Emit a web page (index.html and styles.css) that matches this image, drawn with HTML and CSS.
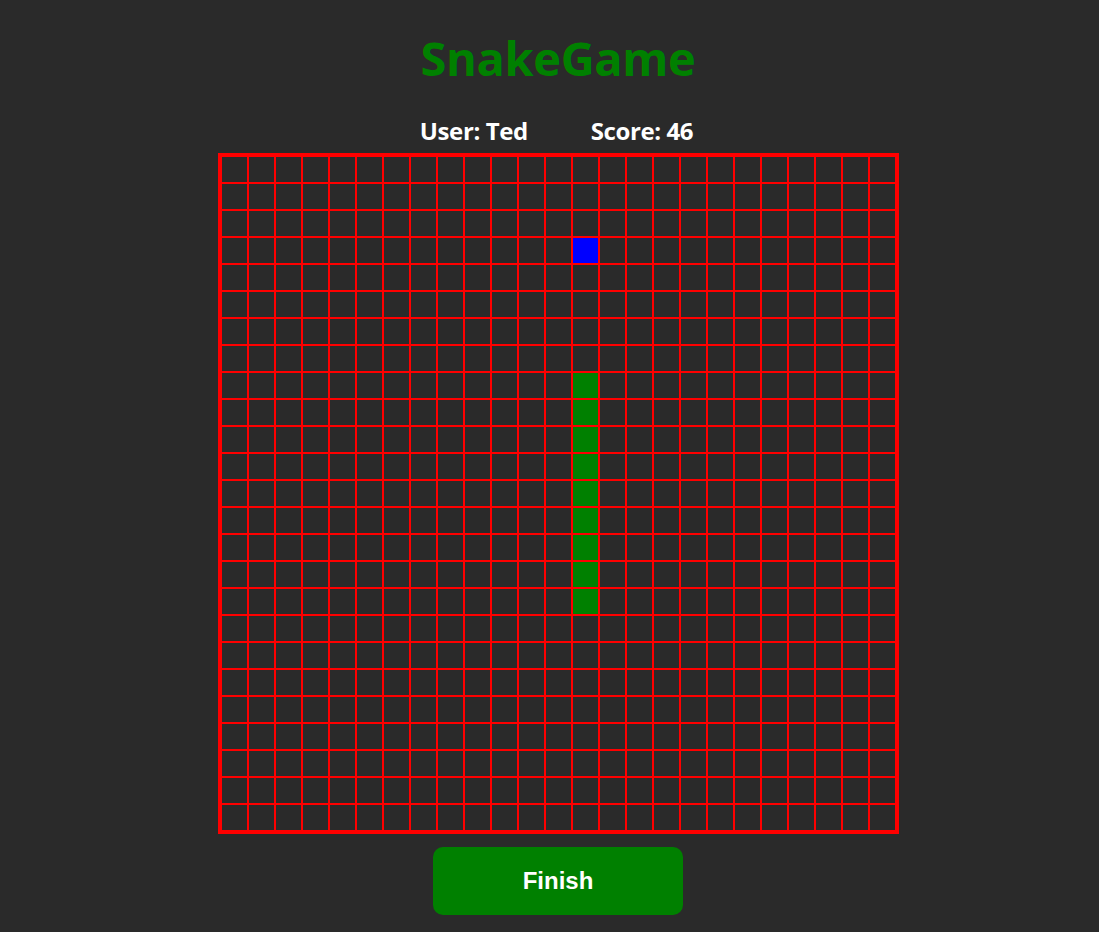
FILE: index.html
```html
<!DOCTYPE html>
<html lang="en">
<head>
<meta charset="utf-8">
<title>SnakeGame</title>
<link rel="stylesheet" href="styles.css">
</head>
<body>
<main class="game">
  <h1 class="title">SnakeGame</h1>
  <div class="info">
    <span class="info-item">User: Ted</span>
    <span class="info-item">Score: 46</span>
  </div>
  <div class="board" id="board"></div>
  <button class="finish" type="button">Finish</button>
</main>
<script src="script.js"></script>
</body>
</html>
```

FILE: styles.css
```css
html, body {
  margin: 0;
  padding: 0;
  background: #2a2a2a;
}
body {
  font-family: "Open Sans", "Noto Sans", sans-serif;
  color: #ffffff;
}
.game {
  display: flex;
  flex-direction: column;
  align-items: center;
  padding-top: 27px;
  padding-left: 17px;
}
.title {
  margin: 0;
  font-size: 47px;
  line-height: 62px;
  font-weight: 700;
  color: #008000;
  letter-spacing: -0.4px;
}
.info {
  display: flex;
  gap: 63px;
  margin-top: 27px;
  margin-right: 3px;
  font-size: 24px;
  font-weight: 700;
  line-height: 30px;
  letter-spacing: -0.4px;
}
.board {
  display: grid;
  grid-template-columns: repeat(25, 27px);
  grid-auto-rows: 27px;
  border: 3px solid #ff0000;
  margin-top: 7px;
}
.cell {
  box-sizing: border-box;
  border: 1px solid #ff0000;
  background: #2a2a2a;
}
.cell.snake {
  background: #008000;
}
.cell.food {
  background: #0000ff;
}
.finish {
  margin-top: 13px;
  width: 250px;
  height: 68px;
  border: none;
  border-radius: 10px;
  background: #008000;
  color: #ffffff;
  font-family: "Liberation Sans", Arial, sans-serif;
  font-size: 24px;
  font-weight: 700;
}
```

FILE: script.js
```js
(function () {
  var board = document.getElementById('board');
  var size = 25;
  var food = { r: 3, c: 13 };
  var snake = [];
  for (var r = 8; r <= 16; r++) snake.push(r + ',' + 13);
  for (var row = 0; row < size; row++) {
    for (var col = 0; col < size; col++) {
      var cell = document.createElement('div');
      cell.className = 'cell';
      if (row === food.r && col === food.c) cell.className += ' food';
      else if (snake.indexOf(row + ',' + col) !== -1) cell.className += ' snake';
      board.appendChild(cell);
    }
  }
})();
```
